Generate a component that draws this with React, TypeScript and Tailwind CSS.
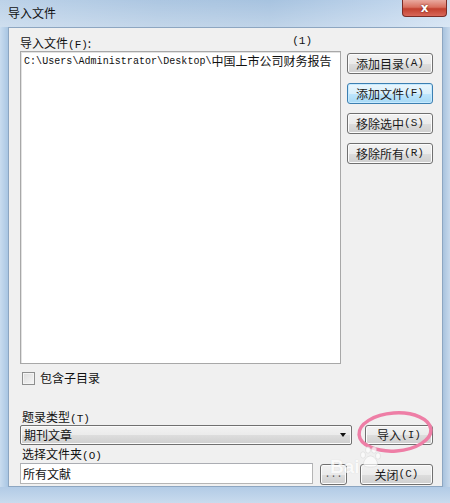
import React from "react"

const cjk = "font-['Noto_Sans_CJK_SC',sans-serif]"

const Btn = ({ children, focused, className = "" }: { children: React.ReactNode; focused?: boolean; className?: string }) => (
  <div
    className={`flex items-center justify-center rounded-[3px] border text-[12px] leading-none text-[#1a1a1a] ${
      focused
        ? "border-[#3c7fb1] bg-[linear-gradient(#eaf6fd_0%,#d9f0fc_50%,#bee6fd_51%,#a7d9f5_100%)] shadow-[inset_0_0_0_1px_#c6eaff]"
        : "border-[#707070] bg-[linear-gradient(#f2f2f2_0%,#ebebeb_50%,#dddddd_51%,#cfcfcf_100%)] shadow-[inset_0_0_0_1px_#fcfcfc]"
    } ${className}`}
  >
    {children}
  </div>
)

const Acc = ({ k }: { k: string }) => (
  <span className="font-['Liberation_Mono',monospace] text-[11px]">({k})</span>
)

export default function App() {
  return (
    <div className={`relative flex w-[450px] h-[503px] flex-col overflow-hidden bg-[#bcd4ec] ${cjk}`}>
      {/* title bar */}
      <div className="relative h-[27px] shrink-0 bg-[linear-gradient(90deg,#b5cde6_0%,#a3c0de_35%,#9dbcdc_60%,#b4cde8_85%,#c6daef_100%)]">
        <div className="absolute inset-0 bg-[linear-gradient(180deg,rgba(255,255,255,0.1),rgba(255,255,255,0.35))]" />
        <span className="absolute left-[8px] top-[6px] text-[12px] leading-[14px] text-[#111]">导入文件</span>
        <div className="absolute right-[3px] top-0 flex h-[17px] w-[45px] items-center justify-center rounded-b-[4px] border border-t-0 border-[#7a2c26] bg-[linear-gradient(#e9a99f_0%,#d9705f_45%,#c2402f_55%,#d8685a_100%)]">
          <span className="font-['DejaVu_Sans',sans-serif] text-[12px] font-bold leading-none text-white [text-shadow:0_0_2px_#5a1a12]">x</span>
        </div>
      </div>

      <div className="flex h-[460px] shrink-0">
        <div className="w-[8px] bg-[linear-gradient(90deg,#c9dcef,#a9c6e3)]" />
        {/* client area */}
        <div className="relative flex w-[435px] flex-col overflow-hidden border border-[#8da6c1] bg-[#f0f0f0] pl-[11px] pt-[8px]">
          <div className="flex">
            <div className="flex w-[321px] flex-col">
              <div className="flex h-[15px] items-center text-[12px] leading-none text-[#111]">
                <span>
                  导入文件<Acc k="F" />:
                </span>
                <span className="ml-auto mr-[29px] -mt-[4px] font-['Liberation_Mono',monospace] text-[11px]">(1)</span>
              </div>
              <div className="h-[313px] border border-[#a8a8a8] bg-white px-[3px] pt-[2px] shadow-[inset_1px_1px_0_#e2e2e2]">
                <div className="flex h-[14px] items-center whitespace-nowrap text-[#111]">
                  <span className="font-['Liberation_Mono',monospace] text-[10px] tracking-[0.05px]">C:\Users\Administrator\Desktop\</span>
                  <span className="text-[12px] leading-none">中国上市公司财务报告</span>
                </div>
              </div>
            </div>
            <div className="ml-[6px] flex flex-col gap-[9px] pt-[17px]">
              <Btn className="h-[21px] w-[86px]">
                添加目录<Acc k="A" />
              </Btn>
              <Btn focused className="h-[21px] w-[86px]">
                添加文件<Acc k="F" />
              </Btn>
              <Btn className="h-[21px] w-[86px]">
                移除选中<Acc k="S" />
              </Btn>
              <Btn className="h-[21px] w-[86px]">
                移除所有<Acc k="R" />
              </Btn>
            </div>
          </div>

          {/* checkbox */}
          <div className="mt-[7px] ml-[2px] flex h-[14px] items-center gap-[5px]">
            <div className="h-[13px] w-[13px] border border-[#8e8f8f] bg-[linear-gradient(135deg,#dcdcdc,#f6f6f6)] shadow-[inset_0_0_0_1px_#f4f4f4]" />
            <span className="text-[12px] leading-none text-[#111]">包含子目录</span>
          </div>

          {/* bottom section */}
          <div className="mt-[25px] ml-[2px] flex h-[15px] items-center text-[12px] leading-none text-[#111]">
            <span>
              题录类型<Acc k="T" />
            </span>
          </div>
          <div className="flex items-center">
            <div className="flex h-[20px] w-[332px] items-center rounded-[2px] border border-[#707070] bg-[linear-gradient(#f2f2f2_0%,#ebebeb_50%,#dddddd_51%,#cfcfcf_100%)] pl-[3px] shadow-[inset_0_0_0_1px_#fbfbfb]">
              <span className="text-[12px] leading-none text-[#111]">期刊文章</span>
              <span className="ml-auto mr-[5px] h-0 w-0 border-x-[3.5px] border-t-[4px] border-x-transparent border-t-[#111]" />
            </div>
            <Btn className="ml-[13px] h-[20px] w-[68px]">
              导入<Acc k="I" />
            </Btn>
          </div>
          <div className="mt-[2px] ml-[2px] flex h-[16px] items-center text-[12px] leading-none text-[#111]">
            <span>
              选择文件夹<Acc k="O" />
            </span>
          </div>
          <div className="flex items-start">
            <div className="flex h-[21px] w-[293px] items-center border border-[#b5b5b5] border-t-[#abadb3] bg-white pl-[2px]">
              <span className="text-[12px] leading-none text-[#111]">所有文献</span>
            </div>
            <Btn className="ml-[7px] mt-[1px] h-[21px] w-[27px]">
              <span className="font-['Liberation_Mono',monospace] text-[10px] text-[#555]">...</span>
            </Btn>
            <Btn className="ml-[13px] mt-[1px] h-[21px] w-[73px]">
              关闭<Acc k="C" />
            </Btn>
          </div>
        </div>
        <div className="w-[7px] bg-[linear-gradient(90deg,#a9c3de,#c7d9ec)]" />
      </div>
      <div className="h-[16px] shrink-0 bg-[linear-gradient(180deg,#b2cbe6,#c9dbee)]" />

      {/* highlight ellipse */}
      <svg className="absolute left-[354px] top-[409px]" width="84" height="46" viewBox="0 0 84 46">
        <ellipse cx="41" cy="23" rx="36" ry="19" fill="none" stroke="#ee7ea6" strokeWidth="3.5" transform="rotate(-4 41 23)" />
      </svg>

      {/* watermark */}
      <div className="pointer-events-none absolute left-[330px] top-[456px] flex items-end opacity-70">
        <span className="font-['Liberation_Sans',sans-serif] text-[19px] font-bold leading-none text-white [text-shadow:0_0_1px_#c8c8c8]">Bai</span>
        <svg width="24" height="22" viewBox="0 0 24 22" className="-mb-[2px] -ml-[2px] -translate-y-[10px]">
          <g fill="#ffffff" stroke="#cfcfcf" strokeWidth="0.6">
            <ellipse cx="5" cy="9" rx="2.5" ry="3.2" />
            <ellipse cx="10" cy="4" rx="2.5" ry="3.2" />
            <ellipse cx="16" cy="4" rx="2.5" ry="3.2" />
            <ellipse cx="20" cy="10" rx="2.5" ry="3.2" />
            <path d="M12.5 10c-4 0-7 5-7 8 0 2.5 3 3 7 3s7-.5 7-3c0-3-3-8-7-8z" />
          </g>
        </svg>
      </div>
    </div>
  )
}
